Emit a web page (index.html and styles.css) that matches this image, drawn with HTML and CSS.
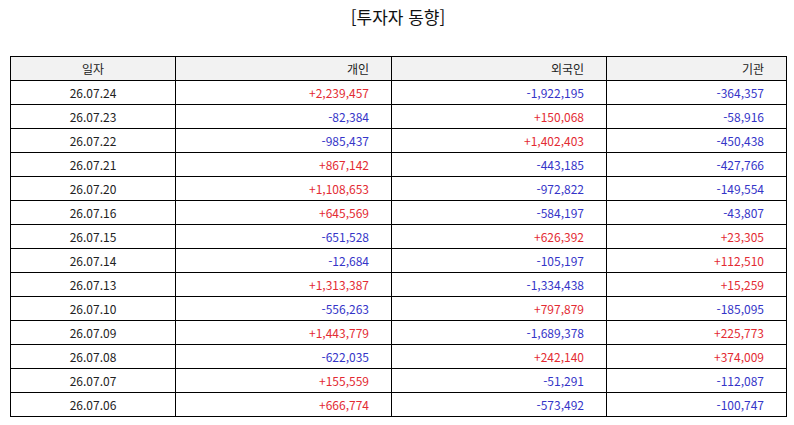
FILE: index.html
```html
<!DOCTYPE html>
<html lang="ko">
<head>
<meta charset="utf-8">
<link rel="stylesheet" href="styles.css">
</head>
<body>
<div class="page">
  <h1 class="title">[투자자 동향]</h1>
  <table class="grid">
    <colgroup>
      <col class="c-date"><col class="c-ind"><col class="c-for"><col class="c-inst">
    </colgroup>
    <thead>
      <tr><th class="center">일자</th><th>개인</th><th>외국인</th><th>기관</th></tr>
    </thead>
    <tbody>
      <tr><td class="center">26.07.24</td><td class="up">+2,239,457</td><td class="down">-1,922,195</td><td class="down">-364,357</td></tr>
      <tr><td class="center">26.07.23</td><td class="down">-82,384</td><td class="up">+150,068</td><td class="down">-58,916</td></tr>
      <tr><td class="center">26.07.22</td><td class="down">-985,437</td><td class="up">+1,402,403</td><td class="down">-450,438</td></tr>
      <tr><td class="center">26.07.21</td><td class="up">+867,142</td><td class="down">-443,185</td><td class="down">-427,766</td></tr>
      <tr><td class="center">26.07.20</td><td class="up">+1,108,653</td><td class="down">-972,822</td><td class="down">-149,554</td></tr>
      <tr><td class="center">26.07.16</td><td class="up">+645,569</td><td class="down">-584,197</td><td class="down">-43,807</td></tr>
      <tr><td class="center">26.07.15</td><td class="down">-651,528</td><td class="up">+626,392</td><td class="up">+23,305</td></tr>
      <tr><td class="center">26.07.14</td><td class="down">-12,684</td><td class="down">-105,197</td><td class="up">+112,510</td></tr>
      <tr><td class="center">26.07.13</td><td class="up">+1,313,387</td><td class="down">-1,334,438</td><td class="up">+15,259</td></tr>
      <tr><td class="center">26.07.10</td><td class="down">-556,263</td><td class="up">+797,879</td><td class="down">-185,095</td></tr>
      <tr><td class="center">26.07.09</td><td class="up">+1,443,779</td><td class="down">-1,689,378</td><td class="up">+225,773</td></tr>
      <tr><td class="center">26.07.08</td><td class="down">-622,035</td><td class="up">+242,140</td><td class="up">+374,009</td></tr>
      <tr><td class="center">26.07.07</td><td class="up">+155,559</td><td class="down">-51,291</td><td class="down">-112,087</td></tr>
      <tr><td class="center">26.07.06</td><td class="up">+666,774</td><td class="down">-573,492</td><td class="down">-100,747</td></tr>
    </tbody>
  </table>
</div>
</body>
</html>
```

FILE: styles.css
```css
html, body {
  margin: 0;
  padding: 0;
  background: #ffffff;
}
body {
  font-family: "Noto Sans CJK KR", "Noto Sans", sans-serif;
  color: #222222;
}
.page {
  padding: 5px 8px 0 10px;
}
.title {
  margin: 0;
  height: 51px;
  font-size: 17px;
  font-weight: 400;
  line-height: 24px;
  text-align: center;
  color: #111111;
}
.grid {
  width: 776px;
  border-collapse: collapse;
  table-layout: fixed;
  font-size: 12px;
}
.c-date { width: 165px; }
.c-ind { width: 216px; }
.c-for { width: 215px; }
.c-inst { width: 180px; }
.grid th,
.grid td {
  border: 1px solid #000000;
  height: 24px;
  padding: 0 22px 0 4px;
  text-align: right;
  line-height: 14px;
  box-sizing: border-box;
  white-space: nowrap;
}
.grid th {
  background: #f2f2f2;
  font-weight: 400;
  color: #222222;
}
.grid th.center,
.grid td.center {
  text-align: center;
  padding: 0 4px;
}
.up { color: #e32b33; }
.down { color: #3535c8; }
```
